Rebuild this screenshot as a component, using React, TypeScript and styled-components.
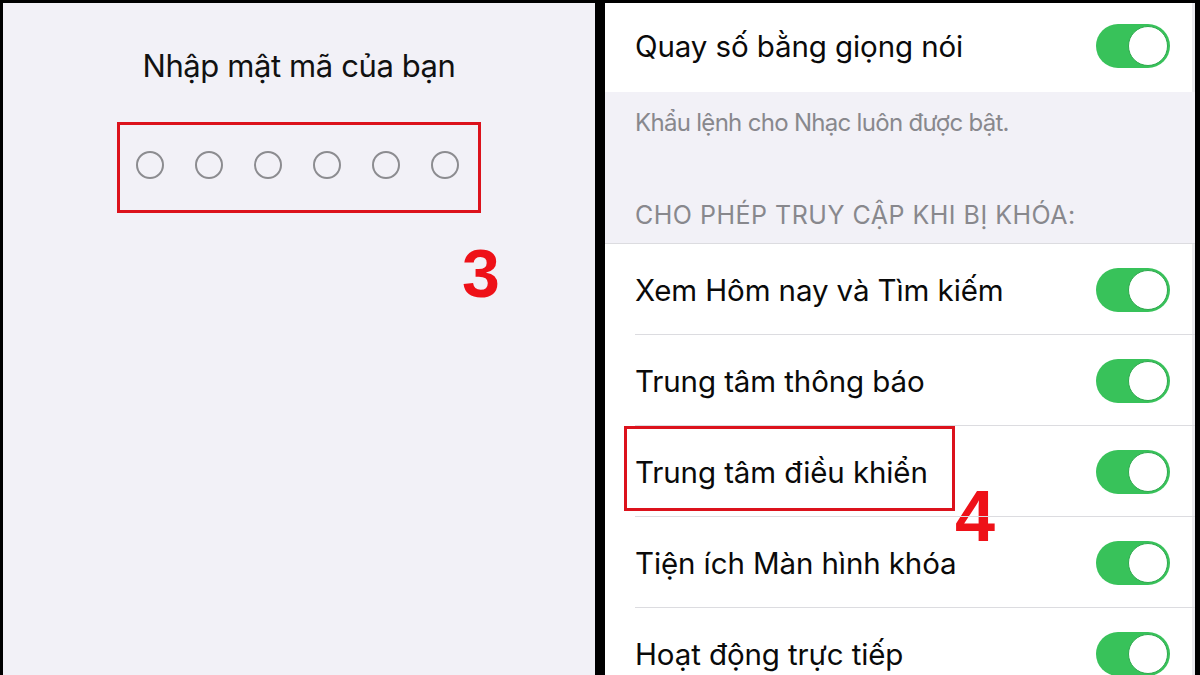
import React from 'react'
import styled, { createGlobalStyle } from 'styled-components'

const GlobalStyle = createGlobalStyle`
  html, body {
    margin: 0;
    padding: 0;
    background: #000;
  }
  body {
    font-family: Inter, 'Noto Sans', 'DejaVu Sans', sans-serif;
    -webkit-font-smoothing: antialiased;
  }
`

const Frame = styled.div`
  width: 1200px;
  height: 675px;
  box-sizing: border-box;
  padding: 3px 5px 3px 3px;
  background: #000;
  display: grid;
  grid-template-columns: 592px 590px;
  column-gap: 10px;
  overflow: hidden;
`

const PasscodePanel = styled.section`
  background: #f2f1f7;
  display: flex;
  flex-direction: column;
  align-items: center;
  padding-top: 43px;
`

const Title = styled.h1`
  margin: 0;
  font-size: 31px;
  font-weight: 400;
  color: #111;
  line-height: 40px;
  letter-spacing: -0.4px;
`

const CodeArea = styled.div`
  position: relative;
  margin-top: 36px;
`

const Highlight = styled.div`
  border: 3.5px solid #dc121c;
  box-sizing: border-box;
`

const DotsBox = styled(Highlight)`
  width: 364px;
  height: 91px;
  display: flex;
  align-items: center;
  justify-content: center;
  gap: 31px;
  padding: 0 4px 5px 0;
`

const Dot = styled.span`
  width: 28px;
  height: 28px;
  box-sizing: border-box;
  border-radius: 50%;
  border: 2px solid #8c8c90;
`

const StepNumber = styled.span<{ size: number }>`
  position: absolute;
  font-family: 'Liberation Sans', Arial, sans-serif;
  font-weight: 700;
  font-size: ${({ size }) => size}px;
  line-height: 1;
  color: #ee1118;
`

const SettingsPanel = styled.section`
  background: #fff;
  display: flex;
  flex-direction: column;
  border-right: 3px solid #ebebef;
`

const Row = styled.div<{ last?: boolean }>`
  position: relative;
  height: 91px;
  flex-shrink: 0;
  display: flex;
  align-items: center;
  justify-content: space-between;
  padding: 0 22px 0 30px;
  &::after {
    content: '';
    display: ${({ last }) => (last ? 'none' : 'block')};
    position: absolute;
    left: 30px;
    right: -3px;
    bottom: 0;
    height: 1px;
    background: #dcdce0;
  }
`

const TopRow = styled(Row)`
  height: 89px;
  padding-bottom: 4px;
  box-sizing: border-box;
  &::after {
    display: none;
  }
`

const Label = styled.span`
  font-size: 29.5px;
  color: #0a0a0a;
  letter-spacing: -0.1px;
`

const GroupGap = styled.div`
  background: #f2f1f7;
  height: 152px;
  flex-shrink: 0;
  display: flex;
  flex-direction: column;
  justify-content: space-between;
  padding: 14px 30px 11px;
  box-sizing: border-box;
  border-bottom: 1px solid #dcdce0;
  margin-right: -3px;
`

const Caption = styled.div<{ caps?: boolean }>`
  font-size: ${({ caps }) => (caps ? '25px' : '24px')};
  color: #88888d;
  letter-spacing: ${({ caps }) => (caps ? '0.5px' : '-0.7px')};
  line-height: 34px;
`

const Track = styled.div`
  width: 74px;
  height: 44px;
  border-radius: 22px;
  background: #38c25a;
  position: relative;
  flex-shrink: 0;
`

const Knob = styled.div`
  position: absolute;
  right: 2px;
  top: 2px;
  width: 40px;
  height: 40px;
  box-sizing: border-box;
  border-radius: 50%;
  background: #fff;
  border: 1.5px solid #2ea84d;
`

const Toggle = () => (
  <Track>
    <Knob />
  </Track>
)

const rows = [
  'Xem Hôm nay và Tìm kiếm',
  'Trung tâm thông báo',
  'Trung tâm điều khiển',
  'Tiện ích Màn hình khóa',
  'Hoạt động trực tiếp',
]

export default function App() {
  return (
    <>
      <GlobalStyle />
      <Frame>
        <PasscodePanel>
          <Title>Nhập mật mã của bạn</Title>
          <CodeArea>
            <DotsBox>
              {Array.from({ length: 6 }).map((_, i) => (
                <Dot key={i} />
              ))}
            </DotsBox>
            <StepNumber size={68} style={{ left: 345, top: 117 }}>
              3
            </StepNumber>
          </CodeArea>
        </PasscodePanel>

        <SettingsPanel>
          <TopRow>
            <Label>Quay số bằng giọng nói</Label>
            <Toggle />
          </TopRow>
          <GroupGap>
            <Caption>Khẩu lệnh cho Nhạc luôn được bật.</Caption>
            <Caption caps>CHO PHÉP TRUY CẬP KHI BỊ KHÓA:</Caption>
          </GroupGap>
          {rows.map((r, i) => (
            <Row key={r} last={i === rows.length - 1}>
              <Label>{r}</Label>
              <Toggle />
              {i === 2 && (
                <>
                  <Highlight
                    style={{ position: 'absolute', left: 19, top: 0, width: 331, height: 85 }}
                  />
                  <StepNumber size={72} style={{ left: 350, top: 54 }}>
                    4
                  </StepNumber>
                </>
              )}
            </Row>
          ))}
        </SettingsPanel>
      </Frame>
    </>
  )
}
